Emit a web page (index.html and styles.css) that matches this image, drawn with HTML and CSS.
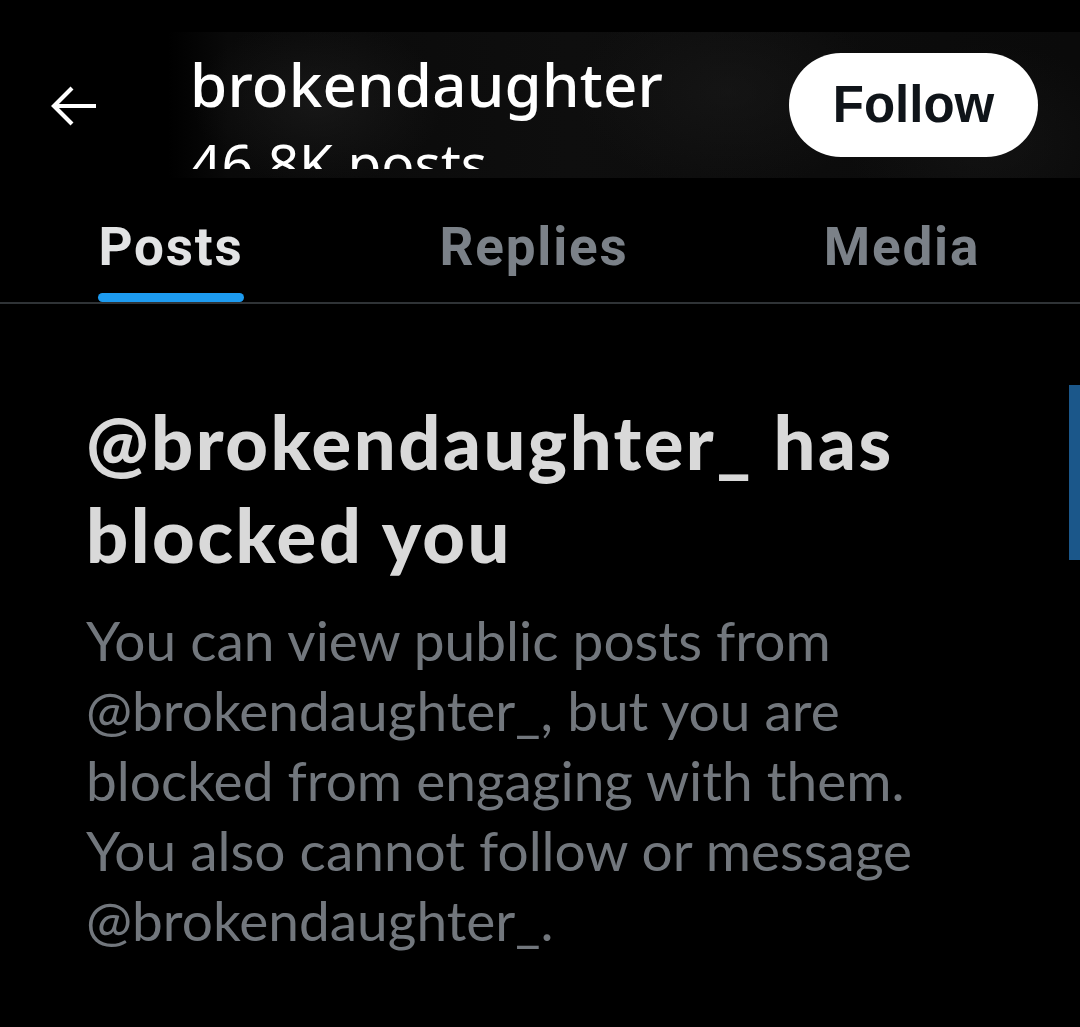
FILE: index.html
```html
<!DOCTYPE html>
<html>
<head>
<meta charset="utf-8">
<link rel="stylesheet" href="styles.css">
</head>
<body>
<div class="page">
  <div class="statusbar"></div>
  <header class="header">
    <div class="back">
      <svg width="48" height="40" viewBox="0 0 48 40"><path d="M46 20H4M22 2L4 20l18 18" fill="none" stroke="#fff" stroke-width="4.2" stroke-linecap="butt" stroke-linejoin="miter"/></svg>
    </div>
    <div class="banner">
      <div class="titles">
        <div class="name">brokendaughter</div>
        <div class="count">46.8K posts</div>
      </div>
      <button class="follow">Follow</button>
    </div>
  </header>
  <nav class="tabs">
    <div class="tab t1 active"><span class="label">Posts</span><span class="bar"></span></div>
    <div class="tab t2"><span class="label">Replies</span></div>
    <div class="tab t3"><span class="label">Media</span></div>
  </nav>
  <main class="content">
    <h1 class="title">@brokendaughter_ has blocked you</h1>
    <p class="desc">You can view public posts from @brokendaughter_, but you are blocked from engaging with them. You also cannot follow or message @brokendaughter_.</p>
    <div class="scroll"></div>
  </main>
</div>
</body>
</html>
```
FILE: styles.css
```css
* { box-sizing: border-box; margin: 0; padding: 0; }
html, body { background: #000; }
body { width: 1080px; height: 1027px; overflow: hidden; }
.page { position: relative; width: 1080px; height: 1027px; background: #000; }
.statusbar { height: 32px; background: #000; }
.header { display: flex; height: 146px; overflow: hidden; }
.back { width: 168px; flex: none; display: flex; align-items: flex-start; padding: 54px 0 0 50px; background: #000; }
.banner {
  flex: 1; display: flex; justify-content: space-between; align-items: flex-start;
  padding-right: 42px;
  background:
    radial-gradient(ellipse 180px 120px at 150px 70px, rgba(36,36,36,0.5), rgba(0,0,0,0) 70%),
    radial-gradient(ellipse 220px 140px at 560px 60px, rgba(30,30,30,0.45), rgba(0,0,0,0) 70%),
    radial-gradient(ellipse 200px 140px at 820px 110px, rgba(28,28,28,0.45), rgba(0,0,0,0) 70%),
    linear-gradient(90deg, #000 0px, #090909 60px, #0e0e0e 400px, #0a0a0a 900px);
}
.titles { padding-left: 22px; height: 137px; overflow: hidden; }
.name { font-family: "Noto Sans", sans-serif; font-weight: 500; font-size: 60px; line-height: 1; color: #fff; margin-top: 22px; letter-spacing: 0.2px; }
.count { font-family: "Noto Sans", sans-serif; font-size: 55px; line-height: 1; color: #fff; margin-top: 21px; white-space: nowrap; }
.follow {
  margin-top: 21px; width: 249px; height: 104px; border: none; border-radius: 52px; background: #fff;
  font-family: "Liberation Sans", Arial, sans-serif; font-weight: 700; font-size: 51px; color: #0f1419;
  display: flex; align-items: center; justify-content: center; padding-bottom: 2px;
}
.tabs { display: flex; height: 126px; border-bottom: 2px solid #2f3336; padding-top: 43px; }
.tab { display: flex; flex-direction: column; align-items: center; font-family: Roboto, sans-serif; font-weight: 700; font-size: 53px; color: #7b8188; letter-spacing: 1.8px; line-height: 1; }
.t1 { width: 342px; }
.t2 { width: 384px; }
.t3 { width: 352px; }
.tab.active { color: #e2e3e4; }
.label { display: block; }
.bar { display: block; width: 146px; height: 9px; border-radius: 5px; background: #1d9bf0; margin-top: 19px; }
.content { position: relative; height: 723px; padding: 91px 94px 0 86px; }
.title { font-family: Lato, sans-serif; font-weight: 900; font-size: 74px; line-height: 93px; color: #d9d9d9; letter-spacing: 2.5px; }
.desc { font-family: Lato, sans-serif; font-weight: 400; font-size: 55px; line-height: 70px; color: #72777d; margin-top: 24px; }
.scroll { position: absolute; right: 0; top: 81px; width: 11px; height: 175px; background: #1b578a; }
```
